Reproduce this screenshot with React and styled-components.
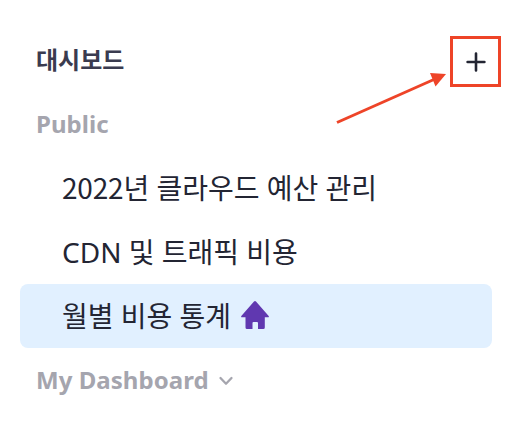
import React from 'react';
import styled, { createGlobalStyle } from 'styled-components';

const GlobalStyle = createGlobalStyle`
  * { box-sizing: border-box; }
  body { margin: 0; background: #fff; }
`;

const Sidebar = styled.nav`
  position: relative;
  width: 512px;
  height: 440px;
  padding: 28px 20px 0;
  background: #fff;
  color: #232533;
  font-family: 'Noto Sans', 'Noto Sans CJK KR', sans-serif;
`;

const Header = styled.header`
  display: flex;
  align-items: center;
  height: 64px;
  padding: 0 0 0 16px;
`;

const Title = styled.h1`
  flex: 1;
  margin: 0;
  color: #3a3b4f;
  font-size: 24px;
  line-height: 32px;
  font-weight: 700;
`;

const AddButton = styled.button`
  display: grid;
  place-items: center;
  width: 51px;
  height: 51px;
  margin: 3px -9px 0 0;
  padding: 0;
  border: 3px solid #ee4428;
  background: #fff;
  color: #232533;
`;

const SectionLabel = styled.h2`
  display: flex;
  align-items: center;
  gap: 9px;
  height: 64px;
  margin: 0;
  padding: 0 0 2px 16px;
  color: #a5a5ae;
  font-size: 24px;
  font-weight: 700;
  letter-spacing: 0.05px;
`;

const Chevron = styled.svg`
  margin-top: 4px;
`;

const List = styled.ul`
  margin: 0;
  padding: 0;
  list-style: none;
`;

const Item = styled.li`
  display: flex;
  align-items: center;
  gap: 10px;
  height: 64px;
  padding-left: 42px;
  border-radius: 8px;
  background: ${({ $active }) => ($active ? '#e1f0ff' : 'transparent')};
  font-size: 28px;
  white-space: nowrap;
`;

const Name = styled.span`
  line-height: 38px;
`;

const Year = styled.span`
  font-family: 'Noto Sans CJK KR', sans-serif;
  line-height: 1;
  letter-spacing: -0.2px;
`;

const HomeIcon = styled.svg`
  margin-bottom: 2px;
`;

const Arrow = styled.svg`
  position: absolute;
  left: 330px;
  top: 64px;
`;

export default function App() {
  return (
    <>
      <GlobalStyle />
      <Sidebar>
        <Header>
          <Title>대시보드</Title>
          <AddButton aria-label="Add">
            <svg width="20" height="20" viewBox="0 0 20 20" stroke="currentColor" strokeWidth="2.6" strokeLinecap="round">
              <path d="M10 1.6v16.8M1.6 10h16.8" />
            </svg>
          </AddButton>
        </Header>
        <SectionLabel>Public</SectionLabel>
        <List>
          <Item><Name><Year>2022</Year>년 클라우드 예산 관리</Name></Item>
          <Item><Name>CDN 및 트래픽 비용</Name></Item>
          <Item $active>
            <Name>월별 비용 통계</Name>
            <HomeIcon width="28" height="28" viewBox="0 0 28 28" fill="#6038b0">
              <path d="M13 .5q1-.8 2 0L27.700 15q.6 1.300-.7 1.300H23.800V26.500q0 1.500-1.500 1.500H17v-6q0-1-1-1H12.500q-1 0-1 1V28H6q-1.500 0-1.500-1.500V16.300H1Q-.3 16.300.3 15z" />
            </HomeIcon>
          </Item>
        </List>
        <SectionLabel>
          My Dashboard
          <Chevron width="16" height="10" viewBox="0 0 16 10" fill="none" stroke="#a5a5ae" strokeWidth="2.3" strokeLinecap="round" strokeLinejoin="round">
            <path d="m2.5 2 5.500 5.700 5.500-5.700" />
          </Chevron>
        </SectionLabel>
        <Arrow width="120" height="64" viewBox="0 0 120 64">
          <path d="M7 58.500 105 15" stroke="#ee4428" strokeWidth="3" />
          <path d="M116 10 105.500 22.500 100 9z" fill="#ee4428" />
        </Arrow>
      </Sidebar>
    </>
  );
}
